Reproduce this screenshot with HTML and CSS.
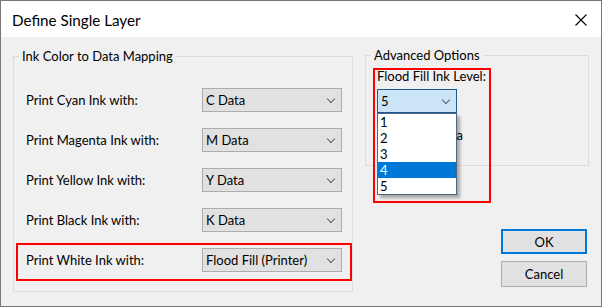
FILE: index.html
```html
<!DOCTYPE html>
<html>
<head>
<meta charset="utf-8">
<link rel="stylesheet" href="styles.css">
</head>
<body>
<div class="window">
  <div class="titlebar">
    <span class="title">Define Single Layer</span>
    <svg class="close" width="14" height="14" viewBox="0 0 14 14"><path d="M1.5 1.5 L12.5 12.5 M12.5 1.5 L1.5 12.5" stroke="#000" stroke-width="1.1" fill="none"/></svg>
  </div>
  <div class="main">
    <div class="group group-left">
      <span class="legend">Ink Color to Data Mapping</span>
      <div class="rows">
        <span class="lbl">Print Cyan Ink with:</span>
        <div class="combo"><span>C Data</span><i class="chev"></i></div>
        <span class="lbl">Print Magenta Ink with:</span>
        <div class="combo"><span>M Data</span><i class="chev"></i></div>
        <span class="lbl">Print Yellow Ink with:</span>
        <div class="combo"><span>Y Data</span><i class="chev"></i></div>
        <span class="lbl">Print Black Ink with:</span>
        <div class="combo"><span>K Data</span><i class="chev"></i></div>
        <span class="lbl">Print White Ink with:</span>
        <div class="combo"><span>Flood Fill (Printer)</span><i class="chev"></i></div>
      </div>
    </div>
    <div class="right-col">
      <div class="group group-right">
        <span class="legend">Advanced Options</span>
        <span class="lbl level-lbl">Flood Fill Ink Level:</span>
        <div class="combo combo-open">
          <span>5</span><i class="chev"></i>
          <ul class="droplist">
            <li>1</li>
            <li>2</li>
            <li>3</li>
            <li class="sel">4</li>
            <li>5</li>
          </ul>
        </div>
        <span class="lbl hidden-lbl">Data</span>
      </div>
      <div class="buttons">
        <div class="btn btn-default">OK</div>
        <div class="btn">Cancel</div>
      </div>
    </div>
  </div>
  <div class="mark mark-level"></div>
  <div class="mark mark-white"></div>
</div>
</body>
</html>
```
FILE: styles.css
```css
* { box-sizing: border-box; }
html, body { margin: 0; padding: 0; background: #f0f0f0; }
body {
  font-family: Lato, "Noto Sans", sans-serif;
  font-size: 13px;
  color: #000;
}
.window {
  position: relative;
  width: 602px;
  height: 307px;
  border: 1px solid #767676;
  background: #f0f0f0;
  overflow: hidden;
}
.titlebar {
  height: 36px;
  background: #fff;
  display: flex;
  align-items: center;
  justify-content: space-between;
  padding: 0 13px 0 11px;
}
.title {
  font-size: 15.2px;
  line-height: 20px;
  padding-top: 1px;
}
.close { display: block; margin-top: 1px; }
.main {
  display: flex;
  gap: 12px;
  padding: 19px 12px 0 12px;
}
.group {
  position: relative;
  border: 1px solid #dcdcdc;
}
.legend {
  position: absolute;
  top: -10px;
  left: 5px;
  padding: 0 3px 0 3px;
  line-height: 18px;
  background: #f0f0f0;
  white-space: nowrap;
}
.group-left {
  width: 340px;
  height: 236px;
}
.rows {
  display: grid;
  grid-template-columns: 1fr 140px;
  row-gap: 16px;
  align-items: center;
  padding: 31px 10px 0 12px;
}
.lbl { line-height: 18px; white-space: nowrap; }
.combo {
  position: relative;
  height: 24px;
  background: #e1e1e1;
  border: 1px solid #adadad;
  display: flex;
  align-items: center;
  justify-content: space-between;
  padding: 0 6px 0 3px;
  white-space: nowrap;
}
.chev {
  display: block;
  width: 6px;
  height: 6px;
  border-right: 1px solid #606060;
  border-bottom: 1px solid #606060;
  transform: rotate(45deg);
  margin: -3px 1px 0 0;
}
.right-col {
  width: 224px;
  display: flex;
  flex-direction: column;
}
.group-right {
  height: 111px;
  margin-top: -1px;
  display: flex;
  flex-direction: column;
  align-items: flex-start;
  padding: 11px 0 0 11px;
}
.level-lbl { margin-bottom: 4px; }
.combo-open {
  width: 80px;
  background: #cce4f7;
  border-color: #1c5a94;
}
.droplist {
  position: absolute;
  top: 23px;
  left: -1px;
  width: 80px;
  margin: 0;
  padding: 0;
  list-style: none;
  background: #fff;
  border: 1px solid #4f6580;
  box-shadow: 3px 3px 3px rgba(0, 0, 0, 0.3);
  z-index: 2;
}
.droplist li {
  height: 16px;
  line-height: 16px;
  padding-left: 2px;
}
.droplist li.sel {
  background: #0078d7;
  color: #fff;
}
.hidden-lbl {
  width: 86px;
  text-align: right;
  margin-top: 13px;
}
.buttons {
  align-self: flex-end;
  margin: 63px 2px 0 0;
  display: flex;
  flex-direction: column;
  gap: 7px;
}
.btn {
  width: 86px;
  height: 25px;
  background: #e1e1e1;
  border: 1px solid #adadad;
  display: flex;
  align-items: center;
  justify-content: center;
  line-height: 18px;
}
.btn + .btn { height: 26px; }
.btn-default { border: 2px solid #0078d7; }
.mark {
  position: absolute;
  border: 2px solid #ff0000;
  z-index: 3;
}
.mark-level { left: 372px; top: 67px; width: 118px; height: 135px; }
.mark-white { left: 15px; top: 242px; width: 336px; height: 38px; }
```
